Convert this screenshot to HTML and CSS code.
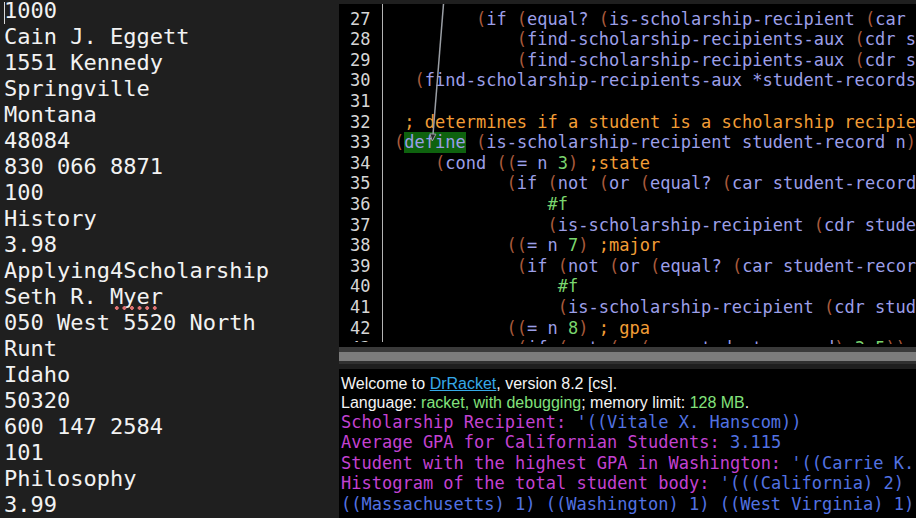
FILE: index.html
```html
<!DOCTYPE html>
<html>
<head>
<meta charset="utf-8">
<title>DrRacket</title>
<link rel="stylesheet" href="styles.css">
</head>
<body>
<div class="app">
  <div class="doc">
    <span class="cursor"></span>
    <div class="doc-lines">
      <div>1000</div>
      <div>Cain J. Eggett</div>
      <div>1551 Kennedy</div>
      <div>Springville</div>
      <div>Montana</div>
      <div>48084</div>
      <div>830 066 8871</div>
      <div>100</div>
      <div>History</div>
      <div>3.98</div>
      <div>Applying4Scholarship</div>
      <div>Seth R. <span class="misspelled">Myer</span></div>
      <div>050 West 5520 North</div>
      <div>Runt</div>
      <div>Idaho</div>
      <div>50320</div>
      <div>600 147 2584</div>
      <div>101</div>
      <div>Philosophy</div>
      <div>3.99</div>
    </div>
  </div>
  <div class="ide">
    <div class="editor">
      <div class="gutter">
        <div>27</div><div>28</div><div>29</div><div>30</div><div>31</div><div>32</div><div>33</div><div>34</div><div>35</div><div>36</div><div>37</div><div>38</div><div>39</div><div>40</div><div>41</div><div>42</div><div>43</div>
      </div>
      <div class="code">
<div class="ln">        <span class="k">(</span>if <span class="k">(</span>equal? <span class="k">(</span>is-scholarship-recipient <span class="k">(</span>car student-records<span class="k">)</span> n<span class="k">)</span> <span class="n">#t</span><span class="k">)</span></div>
<div class="ln">            <span class="k">(</span>find-scholarship-recipients-aux <span class="k">(</span>cdr student-records<span class="k">)</span> n<span class="k">)</span></div>
<div class="ln">            <span class="k">(</span>find-scholarship-recipients-aux <span class="k">(</span>cdr student-records<span class="k">)</span> n<span class="k">)</span><span class="k">)</span><span class="k">)</span></div>
<div class="ln">  <span class="k">(</span>find-scholarship-recipients-aux *student-records* n<span class="k">)</span><span class="k">)</span></div>
<div class="ln"> </div>
<div class="ln"> <span class="c">; determines if a student is a scholarship recipient</span></div>
<div class="ln"><span class="k">(</span><span class="hl">define</span> <span class="k">(</span>is-scholarship-recipient student-record n<span class="k">)</span></div>
<div class="ln">    <span class="k">(</span>cond <span class="k">(</span><span class="k">(</span>= n <span class="n">3</span><span class="k">)</span> <span class="c">;state</span></div>
<div class="ln">           <span class="k">(</span>if <span class="k">(</span>not <span class="k">(</span>or <span class="k">(</span>equal? <span class="k">(</span>car student-record<span class="k">)</span> state<span class="k">)</span><span class="k">)</span><span class="k">)</span></div>
<div class="ln">               <span class="n">#f</span></div>
<div class="ln">               <span class="k">(</span>is-scholarship-recipient <span class="k">(</span>cdr student-record<span class="k">)</span> <span class="k">(</span>+ n <span class="n">1</span><span class="k">)</span><span class="k">)</span><span class="k">)</span><span class="k">)</span></div>
<div class="ln">           <span class="k">(</span><span class="k">(</span>= n <span class="n">7</span><span class="k">)</span> <span class="c">;major</span></div>
<div class="ln">            <span class="k">(</span>if <span class="k">(</span>not <span class="k">(</span>or <span class="k">(</span>equal? <span class="k">(</span>car student-record<span class="k">)</span> major<span class="k">)</span><span class="k">)</span><span class="k">)</span></div>
<div class="ln">                <span class="n">#f</span></div>
<div class="ln">                <span class="k">(</span>is-scholarship-recipient <span class="k">(</span>cdr student-record<span class="k">)</span> <span class="k">(</span>+ n <span class="n">1</span><span class="k">)</span><span class="k">)</span><span class="k">)</span><span class="k">)</span></div>
<div class="ln">           <span class="k">(</span><span class="k">(</span>= n <span class="n">8</span><span class="k">)</span> <span class="c">; gpa</span></div>
<div class="ln">            <span class="k">(</span>if <span class="k">(</span>not <span class="k">(</span>&gt; <span class="k">(</span>gpa student-record<span class="k">)</span> <span class="n">3.5</span><span class="k">)</span><span class="k">)</span></div>
      </div>
      <svg class="arrow" width="120" height="145" viewBox="0 0 120 145">
        <line x1="104.5" y1="0" x2="94" y2="130.5" stroke="#9a9ea4" stroke-width="1.5"/>
        <polygon points="93.3,137 96.9,130.2 90.9,129.8" fill="#2a2a2a" stroke="#9a9ea4" stroke-width="1"/>
      </svg>
    </div>
    <div class="split"></div>
    <div class="repl">
      <div class="info">Welcome to <span class="link">DrRacket</span>, version 8.2 [cs].</div>
      <div class="info">Language: <span class="ok">racket, with debugging</span>; memory limit: <span class="ok">128 MB</span>.</div>
      <div class="out"><span class="lbl">Scholarship Recipient: </span><span class="val">'((Vitale X. Hanscom))</span></div>
      <div class="out"><span class="lbl">Average GPA for Californian Students: </span><span class="val">3.115</span></div>
      <div class="out"><span class="lbl">Student with the highest GPA in Washington: </span><span class="val">'((Carrie K. Hollister))</span></div>
      <div class="out"><span class="lbl">Histogram of the total student body: </span><span class="val">'(((California) 2) ((Colorado) 1)</span></div>
      <div class="out"><span class="val">((Massachusetts) 1) ((Washington) 1) ((West Virginia) 1))</span></div>
    </div>
  </div>
</div>
</body>
</html>
```

FILE: styles.css
```css
html, body {
  margin: 0;
  padding: 0;
  background: #1f1f1f;
}

.app {
  display: flex;
  width: 916px;
  height: 518px;
  overflow: hidden;
}

.doc {
  position: relative;
  flex: none;
  width: 339px;
  box-sizing: border-box;
  padding-left: 4px;
  background: #1f1f1f;
  color: #f2f2f2;
  font-family: "DejaVu Sans Mono", monospace;
  font-size: 22px;
  line-height: 26px;
  overflow: hidden;
}

.doc-lines {
  margin-top: -2px;
}

.doc-lines > div {
  white-space: pre;
  height: 26px;
}

.cursor {
  position: absolute;
  left: 4px;
  top: 2px;
  width: 1px;
  height: 22px;
  background: #d8d8d8;
}

.misspelled {
  position: relative;
}

.misspelled::after {
  content: "";
  position: absolute;
  left: 3px;
  right: 5px;
  bottom: -1px;
  height: 4px;
  background-image: radial-gradient(circle, #e07272 1.6px, transparent 2.1px);
  background-size: 7.6px 4px;
  background-repeat: repeat-x;
}

.ide {
  flex: 1;
  min-width: 0;
  display: flex;
  flex-direction: column;
  background: #1f1f1f;
}

.editor {
  position: relative;
  flex: none;
  height: 343px;
  margin-top: 4px;
  background: #000;
  display: flex;
  align-items: flex-start;
  overflow: hidden;
  font-family: "DejaVu Sans Mono", monospace;
  font-size: 17px;
  line-height: 20.6px;
}

.gutter {
  flex: none;
  height: 338px;
  box-sizing: border-box;
  width: 43.5px;
  padding: 4.7px 11px 0 0;
  text-align: right;
  color: #d6d6d6;
  border-right: 1px solid #b4b4b4;
  overflow: hidden;
}

.gutter > div {
  height: 20.6px;
}

.code {
  flex: 1;
  min-width: 0;
  height: 339.5px;
  box-sizing: border-box;
  padding: 4.7px 0 0 11.5px;
  color: #9c9fe8;
  overflow: hidden;
}

.ln {
  height: 20.6px;
  white-space: pre;
}

.k { color: #a85a3b; }
.c { color: #f29d36; }
.n { color: #7ad66e; }

.hl {
  display: inline-block;
  vertical-align: top;
  background: #0e620e;
  height: 20.6px;
}

.arrow {
  position: absolute;
  left: 0;
  top: 0;
}

.split {
  flex: none;
  height: 23px;
  background: linear-gradient(to bottom,
    #3a3a3a 0, #3a3a3a 5px,
    #7c7c7c 5px, #7c7c7c 14px,
    #303030 14px, #303030 17px,
    #1e1e1e 17px, #1e1e1e 22px,
    #000 22px);
}

.repl {
  flex: 1;
  background: #000;
  padding: 3.5px 0 0 2px;
  overflow: hidden;
}

.info {
  font-family: "Liberation Sans", Arial, sans-serif;
  font-size: 16px;
  line-height: 19px;
  color: #f4f4f4;
  white-space: pre;
}

.link {
  color: #36a9e8;
  text-decoration: underline;
}

.ok { color: #82e27c; }

.out {
  font-family: "DejaVu Sans Mono", monospace;
  font-size: 17px;
  line-height: 20.6px;
  white-space: pre;
}

.lbl { color: #c342d2; }
.val { color: #5272e2; }
```
